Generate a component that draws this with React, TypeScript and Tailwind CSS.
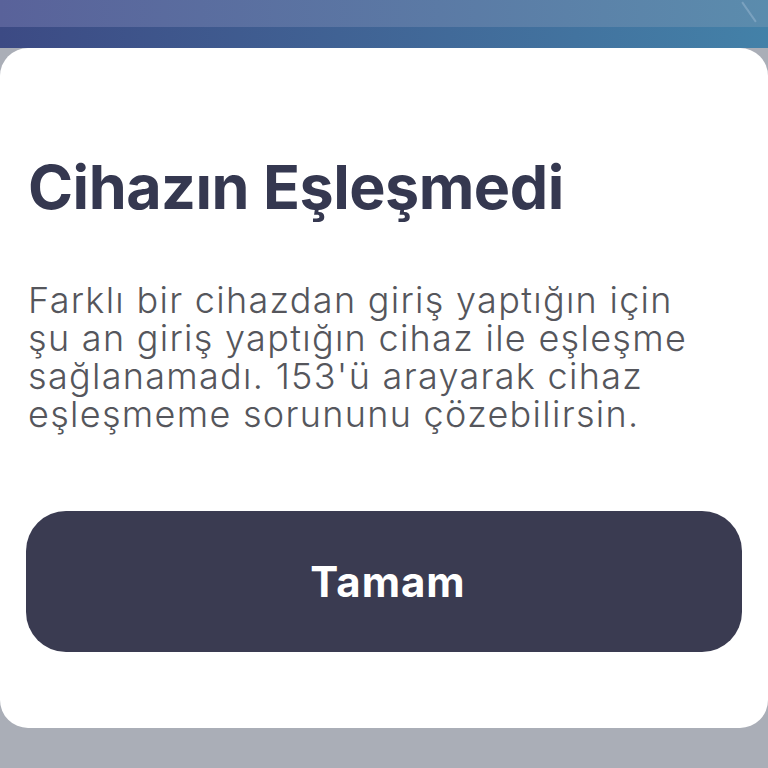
export default function App() {
  return (
    <div className="relative h-[768px] w-[768px] overflow-hidden bg-[#aaaeb7] font-['Inter',sans-serif]">
      <div className="h-[27px] bg-gradient-to-r from-[#59629a] to-[#5b8cad]" />
      <div className="h-[21px] bg-gradient-to-r from-[#3c4a84] to-[#4381a8]" />
      <div className="absolute right-[18px] top-0 h-[24px] w-[2px] rotate-[-35deg] bg-[#8fb0cc]/60" />
      <div className="h-[680px] rounded-[28px] bg-white px-[28px] pt-[103px]">
        <h1 className="whitespace-nowrap text-[61px] font-bold leading-[72px] tracking-[-0.5px] text-[#353850]">Cihazın Eşleşmedi</h1>
        <div className="mt-[58px] flex flex-col whitespace-nowrap text-[36px] font-light leading-[38px] tracking-[1.3px] text-[#55565c]">
          <span className="h-[38px] overflow-visible">Farklı bir cihazdan giriş yaptığın için</span>
          <span className="h-[38px] overflow-visible">şu an giriş yaptığın cihaz ile eşleşme</span>
          <span className="h-[38px] overflow-visible">sağlanamadı. 153'ü arayarak cihaz</span>
          <span className="h-[38px] overflow-visible">eşleşmeme sorununu çözebilirsin.</span>
        </div>
        <button className="-mx-[2px] mt-[78px] flex h-[141px] w-[716px] items-center justify-center rounded-[40px] bg-[#3a3b51] pl-[8px] text-[42px] font-bold tracking-[1px] text-white">
          Tamam
        </button>
      </div>
    </div>
  )
}
